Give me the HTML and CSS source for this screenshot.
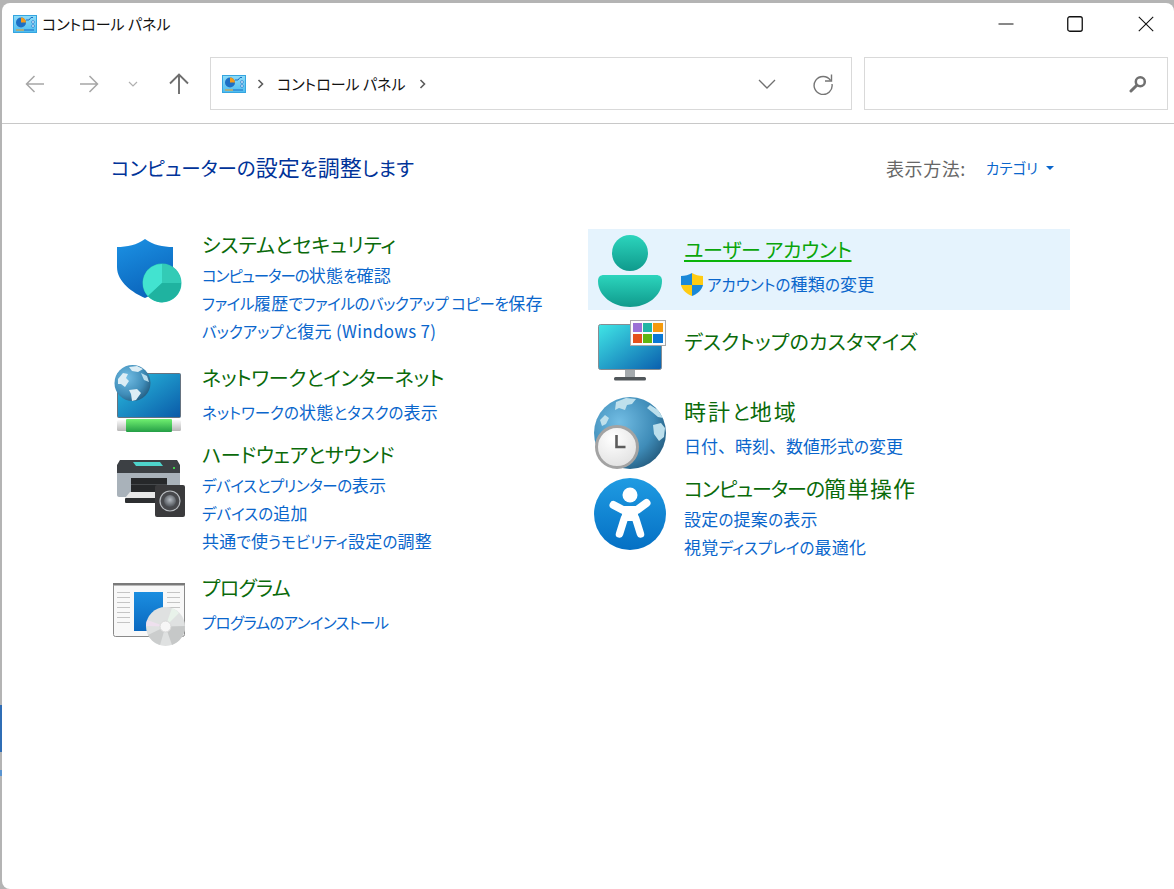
FILE: index.html
```html
<!DOCTYPE html>
<html lang="ja">
<head>
<meta charset="utf-8">
<title>コントロール パネル</title>
<link rel="stylesheet" href="styles.css">
</head>
<body>
<div class="backdrop backdrop--a"></div>
<div class="backdrop backdrop--b"></div>
<main class="window">
  <svg width="0" height="0" class="defs">
    <defs>
      <linearGradient id="cpBg" x1="0" y1="0" x2="0" y2="1"><stop offset="0" stop-color="#8edcf8"/><stop offset="1" stop-color="#4dbcf0"/></linearGradient>
      <linearGradient id="shieldG" x1="0" y1="0" x2="0.4" y2="1"><stop offset="0" stop-color="#1c92e4"/><stop offset="1" stop-color="#0b66bd"/></linearGradient>
      <linearGradient id="screenG" x1="0" y1="0" x2="1" y2="1"><stop offset="0" stop-color="#2bbfe0"/><stop offset="1" stop-color="#0a5aa8"/></linearGradient>
      <linearGradient id="screenH" x1="0" y1="0" x2="1" y2="1"><stop offset="0" stop-color="#40e6e6"/><stop offset="1" stop-color="#0a5fae"/></linearGradient>
      <linearGradient id="greenG" x1="0" y1="0" x2="0" y2="1"><stop offset="0" stop-color="#70f070"/><stop offset="1" stop-color="#249e46"/></linearGradient>
      <linearGradient id="barG" x1="0" y1="0" x2="0" y2="1"><stop offset="0" stop-color="#fafafa"/><stop offset="1" stop-color="#b8b8b8"/></linearGradient>
      <radialGradient id="globeG" cx="0.35" cy="0.35" r="0.8"><stop offset="0" stop-color="#72bde4"/><stop offset="0.6" stop-color="#3f8cb8"/><stop offset="1" stop-color="#1d4f70"/></radialGradient>
      <linearGradient id="tealG" x1="0" y1="0" x2="0" y2="1"><stop offset="0" stop-color="#2cd5bd"/><stop offset="1" stop-color="#0f9a8c"/></linearGradient>
      <linearGradient id="accessG" x1="0" y1="0" x2="0" y2="1"><stop offset="0" stop-color="#1f9be2"/><stop offset="1" stop-color="#0570c4"/></linearGradient>
      <linearGradient id="blueTile" x1="0" y1="0" x2="0" y2="1"><stop offset="0" stop-color="#1b8ee0"/><stop offset="1" stop-color="#0a68bf"/></linearGradient>
      <radialGradient id="faceG" cx="0.4" cy="0.3" r="0.8"><stop offset="0" stop-color="#ffffff"/><stop offset="1" stop-color="#dedede"/></radialGradient>
      <radialGradient id="speakG" cx="0.5" cy="0.4" r="0.6"><stop offset="0" stop-color="#b5bbc2"/><stop offset="1" stop-color="#4c5056"/></radialGradient>
      <symbol id="cp" viewBox="0 0 24 18">
        <rect x="0.5" y="0.5" width="23" height="17" fill="url(#cpBg)" stroke="#35a5e0"/>
        <circle cx="8" cy="7.5" r="5" fill="#1d6fc4"/>
        <path d="M8 7.5V2.5A5 5 0 0 1 13 7.5Z" fill="#f39a18"/>
        <path d="M13 5h3l2-2.5h2" fill="none" stroke="#1d6fc4" stroke-width="1"/>
        <circle cx="20" cy="7" r="1.4" fill="#e8f7ff" stroke="#1d6fc4" stroke-width=".7"/>
        <circle cx="20" cy="11" r="1.4" fill="#e8f7ff" stroke="#1d6fc4" stroke-width=".7"/>
        <rect x="3" y="14.5" width="8" height="1" fill="#f39a18"/>
        <rect x="11" y="14.5" width="10" height="1" fill="#1d6fc4"/>
      </symbol>
    </defs>
  </svg>

  <header class="titlebar">
    <svg class="cp-icon cp-icon--title"><use href="#cp"/></svg>
    <h1 class="titlebar__text">コントロール パネル</h1>
    <div class="winctl">
      <svg class="winctl__btn" width="16" height="16" viewBox="0 0 16 16"><path d="M.5 8h15" stroke="#111" stroke-width="1" fill="none"/></svg>
      <svg class="winctl__btn" width="16" height="16" viewBox="0 0 16 16"><rect x=".75" y=".75" width="14.5" height="14.5" rx="2" fill="none" stroke="#111" stroke-width="1.3"/></svg>
      <svg class="winctl__btn" width="16" height="16" viewBox="0 0 16 16"><path d="M.8.8l14.4 14.4M15.2.8L.8 15.2" stroke="#111" stroke-width="1.1" fill="none"/></svg>
    </div>
  </header>

  <nav class="toolbar">
    <div class="navbtn navbtn--wide"><svg width="20" height="18" viewBox="0 0 20 18"><path d="M19 9H1.5M9.5 1L1.5 9l8 8" fill="none" stroke="#a6a6a6" stroke-width="1.5"/></svg></div>
    <div class="navbtn navbtn--wide"><svg width="20" height="18" viewBox="0 0 20 18"><path d="M1 9h17.5M10.5 1l8 8-8 8" fill="none" stroke="#a6a6a6" stroke-width="1.5"/></svg></div>
    <div class="navbtn navbtn--narrow"><svg width="10" height="6" viewBox="0 0 10 6"><path d="M1 1l4 4 4-4" fill="none" stroke="#b0b0b0" stroke-width="1.2"/></svg></div>
    <div class="navbtn navbtn--up"><svg width="20" height="21" viewBox="0 0 20 21"><path d="M10 21V2M1 10.5L10 1.5l9 9" fill="none" stroke="#6e6e6e" stroke-width="1.9"/></svg></div>
    <div class="address">
      <svg class="cp-icon"><use href="#cp"/></svg>
      <svg class="crumb-sep" width="7" height="10" viewBox="0 0 7 10"><path d="M1.5 1l4 4-4 4" fill="none" stroke="#5c5c5c" stroke-width="1.6"/></svg>
      <span class="address__text">コントロール パネル</span>
      <svg class="crumb-sep" width="7" height="10" viewBox="0 0 7 10"><path d="M1.5 1l4 4-4 4" fill="none" stroke="#5c5c5c" stroke-width="1.6"/></svg>
      <svg class="address__drop" width="18" height="10" viewBox="0 0 18 10"><path d="M1 1l8 8 8-8" fill="none" stroke="#707070" stroke-width="1.3"/></svg>
      <svg class="address__refresh" width="22" height="22" viewBox="0 0 22 22"><path d="M18.6 7.5A9 9 0 1 0 20 11" fill="none" stroke="#767676" stroke-width="1.4"/><path d="M19.5 1.5v6.5h-6.5" fill="none" stroke="#767676" stroke-width="1.4"/></svg>
    </div>
    <div class="search">
      <svg width="18" height="18" viewBox="0 0 18 18"><circle cx="11.3" cy="6.7" r="4.5" fill="none" stroke="#707070" stroke-width="2.5"/><path d="M7.8 10.2L2 16" stroke="#707070" stroke-width="3" stroke-linecap="round"/></svg>
    </div>
  </nav>

  <section class="content">
    <div class="content__head">
      <h2 class="page-title">コンピューターの<span class="k">設定</span>を<span class="k">調整</span>します</h2>
      <div class="viewby">
        <span class="viewby__label">表示方法:</span>
        <span class="viewby__value">カテゴリ</span>
        <span class="viewby__caret"></span>
      </div>
    </div>

    <div class="grid">
      <div class="col col--left">
        <article class="cat">
          <svg class="icon" viewBox="113 233 72 72">
            <path d="M145 239C137 245 127 247 117 247V267C117 282 133 293 145 298C157 293 173 282 173 267V247C163 247 153 245 145 239Z" fill="url(#shieldG)"/>
            <circle cx="162" cy="283" r="19.5" fill="#2bc4b4"/>
            <path d="M162 283V264A19 19 0 0 0 148 296Z" fill="#42e3d0"/>
            <path d="M162 283V264A19 19 0 0 1 181 283Z" fill="#33cbb6"/>
            <path d="M162 283H181A19 19 0 0 1 148 296Z" fill="#1fb3a0"/>
          </svg>
          <div class="cat__text">
            <a class="cat__title">システムとセキュリティ</a>
            <ul class="links">
              <li><a class="ls-10">コンピューターの<span class="k">状態</span>を<span class="k">確認</span></a></li>
              <li><a class="ls-4">ファイル<span class="k">履歴</span>でファイルのバックアップ コピーを<span class="k">保存</span></a></li>
              <li><a>バックアップと<span class="k">復元 (Windows 7)</span></a></li>
            </ul>
          </div>
        </article>

        <article class="cat cat--single">
          <svg class="icon" viewBox="113 366 72 72">
            <rect x="117.5" y="373.5" width="63" height="44" rx="1" fill="url(#screenG)" stroke="#667380"/>
            <rect x="117" y="420" width="64" height="11" rx="1.5" fill="url(#barG)"/>
            <rect x="126" y="419" width="46" height="13" rx="1" fill="url(#greenG)"/>
            <circle cx="132.5" cy="383" r="18" fill="url(#globeG)"/>
            <path d="M118 379l5-6 5 1-2 4 3 3-4 6-4-3-3 0zM129 367l8-1 6 3-5 3-6-1zM129 390l8-1 4 4-5 7-4 1-1-7z" fill="#dcedf5"/>
            <path d="M141 373l6 3 2 6-5-2z" fill="#b9dcec"/>
          </svg>
          <div class="cat__text">
            <a class="cat__title ls-3">ネットワークとインターネット</a>
            <ul class="links">
              <li><a>ネットワークの<span class="k">状態</span>とタスクの<span class="k">表示</span></a></li>
            </ul>
          </div>
        </article>

        <article class="cat">
          <svg class="icon" viewBox="113 443 72 72">
            <path d="M120 460H177L180 465V473H117V465Z" fill="#3c4044"/>
            <path d="M133 462H160L163 466H136Z" fill="#4ed4cc"/>
            <rect x="173" y="467" width="2" height="2" fill="#3fd04a"/>
            <path d="M117 473H180V495C180 496 179 497 178 497H119C118 497 117 496 117 495Z" fill="#a9b2ba"/>
            <rect x="131" y="478" width="36" height="20" fill="#26282a"/>
            <rect x="131" y="484" width="36" height="1" fill="#45484b"/>
            <path d="M130 492H156V498H125Z" fill="#e8e8e8"/>
            <rect x="125" y="498" width="40" height="5" rx="1" fill="#2d2f31"/>
            <rect x="155" y="485" width="30" height="32" rx="2" fill="#3a3a3c"/>
            <circle cx="170" cy="501" r="10" fill="#48494d" stroke="#b8bcc0" stroke-width="1.2"/>
            <circle cx="170" cy="501" r="6" fill="url(#speakG)"/>
          </svg>
          <div class="cat__text">
            <a class="cat__title ls-3">ハードウェアとサウンド</a>
            <ul class="links">
              <li><a class="ls-4">デバイスとプリンターの<span class="k">表示</span></a></li>
              <li><a>デバイスの<span class="k">追加</span></a></li>
              <li><a><span class="k">共通</span>で<span class="k">使</span>うモビリティ<span class="k">設定</span>の<span class="k">調整</span></a></li>
            </ul>
          </div>
        </article>

        <article class="cat cat--single">
          <svg class="icon" viewBox="113 576 72 72">
            <rect x="113.5" y="583.5" width="71" height="53" rx="2" fill="#f8f8f8" stroke="#8a8a8a"/>
            <rect x="113" y="583" width="72" height="2.5" fill="#7a7a7a"/>
            <rect x="134" y="592" width="29" height="39" fill="url(#blueTile)"/>
            <path d="M117 592.5h13M117 597.5h13M117 602.5h13M117 607.5h13M117 612.5h13M117 617.5h13M117 622.5h13M167 592.5h13M167 597.5h13M167 602.5h13M167 607.5h13" stroke="#c4c4c4" fill="none"/>
            <circle cx="165.5" cy="626.5" r="19.5" fill="#dfe1e1"/>
            <path d="M165.5 626.5L148 635A19.5 19.5 0 0 0 160 645Z" fill="#cbcdcd"/>
            <path d="M165.5 626.5L172 645A19.5 19.5 0 0 0 185 626Z" fill="#c6c8c8"/>
            <path d="M165.5 626.5L179 613A19.5 19.5 0 0 0 172 608Z" fill="#e8f2ea"/>
            <path d="M165.5 626.5L147 620A19.5 19.5 0 0 0 146 626Z" fill="#eee0ee"/>
            <circle cx="165.5" cy="626.5" r="5.5" fill="#f6f6f6" stroke="#d8d8d8"/>
          </svg>
          <div class="cat__text">
            <a class="cat__title ls-7">プログラム</a>
            <ul class="links">
              <li><a class="ls-7">プログラムのアンインストール</a></li>
            </ul>
          </div>
        </article>
      </div>

      <div class="col col--right">
        <article class="cat cat--single cat--active">
          <svg class="icon" viewBox="594 234 72 72">
            <circle cx="630" cy="253" r="18" fill="url(#tealG)"/>
            <path d="M604 275H656C660 275 662 277 662 281C662 296 647 307 630 307C613 307 598 296 598 281C598 277 600 275 604 275Z" fill="url(#tealG)"/>
          </svg>
          <div class="cat__text">
            <a class="cat__title cat__title--hover ls-3">ユーザー アカウント</a>
            <ul class="links">
              <li class="links__uac">
                <svg class="uac" width="22" height="23" viewBox="0 0 22 23">
                  <path d="M11 0C8 2 4 3 0 3V12H11Z" fill="#1a88d8"/>
                  <path d="M11 0C14 2 18 3 22 3V12H11Z" fill="#ffcb12"/>
                  <path d="M0 12C1 17 6 21 11 23V12Z" fill="#ffcb12"/>
                  <path d="M22 12C21 17 16 21 11 23V12Z" fill="#1a88d8"/>
                </svg>
                <a>アカウントの<span class="k">種類</span>の<span class="k">変更</span></a>
              </li>
            </ul>
          </div>
        </article>

        <article class="cat cat--tall">
          <svg class="icon" viewBox="594 326 72 72">
            <rect x="598.5" y="324.5" width="63" height="45" rx="2" fill="url(#screenH)" stroke="#878d92"/>
            <rect x="625" y="370" width="10" height="7" fill="#a4aaae"/>
            <rect x="614" y="377" width="32" height="3.5" rx="1.5" fill="#50565a"/>
            <rect x="630.5" y="320.5" width="35" height="25" fill="#fbfbfb" stroke="#a8a8a8"/>
            <rect x="633" y="323" width="9" height="9" fill="#9b70d5"/>
            <rect x="643" y="323" width="9" height="9" fill="#1fb5a5"/>
            <rect x="653" y="323" width="10" height="9" fill="#f59a0c"/>
            <rect x="633" y="334" width="9" height="9" fill="#e6501a"/>
            <rect x="643" y="334" width="9" height="9" fill="#5fb510"/>
            <rect x="653" y="334" width="10" height="9" fill="#0a78d4"/>
          </svg>
          <div class="cat__text">
            <a class="cat__title ls-p2">デスクトップのカスタマイズ</a>
          </div>
        </article>

        <article class="cat cat--single">
          <svg class="icon" viewBox="594 396 72 72">
            <circle cx="630" cy="433" r="36" fill="url(#globeG)"/>
            <path d="M616 402l10-4 10 1-4 5-5 1-2 5-6-2-4 2zM600 420l5-5 4 3-3 6-4 2z" fill="#bfe0ec"/>
            <path d="M650 405l8 5 5 8-5-1-6-5-5-4zM653 425l8-2 4 5-1 9-5 4-5-7z" fill="#bcdfec"/>
            <circle cx="617" cy="447" r="20.5" fill="url(#faceG)" stroke="#a3a3a3" stroke-width="3"/>
            <path d="M616.5 435v12h9" fill="none" stroke="#5c5c5c" stroke-width="2.6"/>
          </svg>
          <div class="cat__text">
            <a class="cat__title"><span class="k k--wide">時計</span>と<span class="k k--wide">地域</span></a>
            <ul class="links">
              <li><a><span class="k k--flat">日付、時刻、数値形式</span>の<span class="k k--flat">変更</span></a></li>
            </ul>
          </div>
        </article>

        <article class="cat">
          <svg class="icon" viewBox="594 473 72 72">
            <circle cx="630" cy="514" r="36" fill="url(#accessG)"/>
            <circle cx="630" cy="495" r="7.5" fill="#fff"/>
            <path d="M613.5 505L623 510H637L646.5 503" fill="none" stroke="#fff" stroke-width="8" stroke-linecap="round" stroke-linejoin="round"/>
            <path d="M623 508H637L639 521H621Z" fill="#fff"/>
            <path d="M624.5 518L619.5 534M635.5 518L640.5 534" fill="none" stroke="#fff" stroke-width="7.5" stroke-linecap="round"/>
          </svg>
          <div class="cat__text">
            <a class="cat__title ls-10">コンピューターの<span class="k">簡単操作</span></a>
            <ul class="links">
              <li><a><span class="k">設定</span>の<span class="k">提案</span>の<span class="k">表示</span></a></li>
              <li><a><span class="k">視覚</span>ディスプレイの<span class="k">最適化</span></a></li>
            </ul>
          </div>
        </article>
      </div>
    </div>
  </section>
</main>
</body>
</html>
```

FILE: styles.css
```css
* { box-sizing: border-box; }
html, body { margin: 0; height: 100%; }
body {
  background: #b4b4b4;
  font-family: "Noto Sans CJK JP", "Noto Sans", sans-serif;
  font-feature-settings: "palt" 1;
  overflow: hidden;
  padding: 3px 0 0 2px;
}
.backdrop { position: absolute; left: 0; width: 2px; background: #2f6db5; }
.backdrop--a { top: 705px; height: 47px; }
.backdrop--b { top: 770px; height: 6px; background: #5a94d0; }
.defs { position: absolute; }
.window {
  background: #fff;
  height: 886px;
  border-radius: 8px 8px 0 8px;
  display: flex;
  flex-direction: column;
}
.k { font-feature-settings: normal; line-height: 1; }
.ls-10 { letter-spacing: -1.05px; }
.ls-7 { letter-spacing: -.7px; }
.ls-4 { letter-spacing: -.42px; }
.ls-3 { letter-spacing: -.3px; }
.ls-p2 { letter-spacing: .22px; }

/* title bar */
.titlebar { display: flex; align-items: center; height: 42px; padding-left: 11px; flex: none; }
.cp-icon { width: 24px; height: 18px; flex: none; }
.cp-icon--title { margin-top: -1px; }
.titlebar__text { margin: 0 0 0 5px; font-size: 15px; font-weight: 400; color: #111; line-height: 24px; }
.winctl { margin-left: auto; display: flex; }
.winctl__btn { display: block; margin-right: 55px; }
.winctl__btn:first-child { margin-right: 53px; }
.winctl__btn:last-child { margin-right: 20px; }

/* toolbar */
.toolbar {
  display: flex; align-items: center; flex: none;
  height: 79px; padding: 12px 0 13px 6px;
  border-bottom: 1px solid #c8c8c8;
}
.navbtn { display: flex; align-items: center; justify-content: center; height: 100%; flex: none; }
.navbtn svg { display: block; }
.navbtn--wide { width: 54px; }
.navbtn--narrow { width: 34px; }
.navbtn--up { width: 58px; }
.address {
  margin-left: 2px; width: 642px; height: 53px;
  border: 1px solid #d9d9d9;
  display: flex; align-items: center; padding-left: 11px; flex: none;
}
.crumb-sep { flex: none; margin-left: 11px; }
.address__text { font-size: 15px; color: #111; margin-left: 13px; line-height: 24px; margin-right: 3px; }
.address__drop { margin-left: auto; }
.address__refresh { margin: 0 17px 0 36px; }
.search {
  margin-left: 12px; width: 304px; height: 53px;
  border: 1px solid #d9d9d9;
  display: flex; align-items: center; justify-content: flex-end; padding-right: 20px; flex: none;
}

/* content */
.content { padding: 0 0 0 109px; flex: 1; }
.content__head { display: flex; align-items: center; justify-content: space-between; height: 61px; padding: 27px 120px 0 0; }
.page-title { margin: 0; font-size: 19.5px; font-weight: 400; color: #003399; line-height: 30px; }
.page-title .k { font-size: 22px; }
.viewby { display: flex; align-items: center; }
.viewby__label { font-size: 18px; letter-spacing: .6px; color: #666; line-height: 26px; }
.viewby__value { font-size: 14.5px; color: #0a66cc; margin-left: 20px; line-height: 26px; }
.viewby__caret {
  width: 0; height: 0; margin-left: 8px; margin-top: -1px;
  border-left: 4px solid transparent; border-right: 4px solid transparent; border-top: 4px solid #0a66cc;
}
.grid { display: flex; padding-top: 44px; }
.col--left { width: 477px; flex: none; }
.col--right { width: 482px; flex: none; }

.cat { display: flex; align-items: flex-start; margin-bottom: 16px; padding-left: 2px; }
.icon { width: 72px; height: 72px; flex: none; overflow: visible; margin: 4px 0 -76px; display: block; }
.cat__text { margin-left: 17px; }
.cat__title { display: block; font-size: 20px; line-height: 31px; color: #0a6a0a; }
.cat__title .k { font-size: 22px; letter-spacing: 1px; }
.cat__title .k--wide { letter-spacing: 2px; }
.links { list-style: none; margin: 1px 0 1px; padding: 0; }
.links li { font-size: 15.5px; line-height: 28px; color: #0a66cc; }
.links .k { font-size: 17px; letter-spacing: .3px; }
.links .k--flat { letter-spacing: 0; }
.cat--single { margin-bottom: 12px; }
.cat--single .links { margin-top: 5px; }

.col--right .cat { padding-left: 6px; }
.col--right .icon { margin: 0 0 -72px; }
.col--right .cat__text { margin-left: 18px; }
.cat--tall { margin-bottom: 39px; }
.cat--active { background: #e5f3fd; padding-top: 5px; padding-bottom: 11px; margin-bottom: 16px; }
.cat__title--hover {
  color: #0aa50a;
  text-decoration: underline; text-decoration-color: #0ab40a; text-decoration-thickness: 2px;
  text-underline-offset: 2px; text-decoration-skip-ink: none;
}
.links__uac { display: flex; align-items: center; margin-left: -3px; }
.uac { flex: none; margin-right: 4px; }
```
